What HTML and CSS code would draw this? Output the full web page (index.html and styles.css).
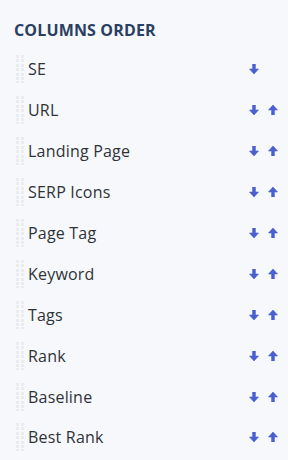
FILE: index.html
```html
<!DOCTYPE html>
<html>
<head>
<meta charset="utf-8">
<link rel="stylesheet" href="styles.css">
</head>
<body>
<div class="panel">
  <h2 class="title">COLUMNS ORDER</h2>
  <ul class="list">
    <li class="row"><span class="grip"></span><span class="label">SE</span><span class="actions"><svg class="arrow" viewBox="0 0 10 10"><path d="M3.6 0h2.8v5H9.5L5 10 0.5 5h3.1z"/></svg><span class="arrow-space"></span></span></li>
    <li class="row"><span class="grip"></span><span class="label">URL</span><span class="actions"><svg class="arrow" viewBox="0 0 10 10"><path d="M3.6 0h2.8v5H9.5L5 10 0.5 5h3.1z"/></svg><svg class="arrow" viewBox="0 0 10 10"><path d="M3.6 10h2.8V5H9.5L5 0 0.5 5h3.1z"/></svg></span></li>
    <li class="row"><span class="grip"></span><span class="label">Landing Page</span><span class="actions"><svg class="arrow" viewBox="0 0 10 10"><path d="M3.6 0h2.8v5H9.5L5 10 0.5 5h3.1z"/></svg><svg class="arrow" viewBox="0 0 10 10"><path d="M3.6 10h2.8V5H9.5L5 0 0.5 5h3.1z"/></svg></span></li>
    <li class="row"><span class="grip"></span><span class="label">SERP Icons</span><span class="actions"><svg class="arrow" viewBox="0 0 10 10"><path d="M3.6 0h2.8v5H9.5L5 10 0.5 5h3.1z"/></svg><svg class="arrow" viewBox="0 0 10 10"><path d="M3.6 10h2.8V5H9.5L5 0 0.5 5h3.1z"/></svg></span></li>
    <li class="row"><span class="grip"></span><span class="label">Page Tag</span><span class="actions"><svg class="arrow" viewBox="0 0 10 10"><path d="M3.6 0h2.8v5H9.5L5 10 0.5 5h3.1z"/></svg><svg class="arrow" viewBox="0 0 10 10"><path d="M3.6 10h2.8V5H9.5L5 0 0.5 5h3.1z"/></svg></span></li>
    <li class="row"><span class="grip"></span><span class="label">Keyword</span><span class="actions"><svg class="arrow" viewBox="0 0 10 10"><path d="M3.6 0h2.8v5H9.5L5 10 0.5 5h3.1z"/></svg><svg class="arrow" viewBox="0 0 10 10"><path d="M3.6 10h2.8V5H9.5L5 0 0.5 5h3.1z"/></svg></span></li>
    <li class="row"><span class="grip"></span><span class="label">Tags</span><span class="actions"><svg class="arrow" viewBox="0 0 10 10"><path d="M3.6 0h2.8v5H9.5L5 10 0.5 5h3.1z"/></svg><svg class="arrow" viewBox="0 0 10 10"><path d="M3.6 10h2.8V5H9.5L5 0 0.5 5h3.1z"/></svg></span></li>
    <li class="row"><span class="grip"></span><span class="label">Rank</span><span class="actions"><svg class="arrow" viewBox="0 0 10 10"><path d="M3.6 0h2.8v5H9.5L5 10 0.5 5h3.1z"/></svg><svg class="arrow" viewBox="0 0 10 10"><path d="M3.6 10h2.8V5H9.5L5 0 0.5 5h3.1z"/></svg></span></li>
    <li class="row"><span class="grip"></span><span class="label">Baseline</span><span class="actions"><svg class="arrow" viewBox="0 0 10 10"><path d="M3.6 0h2.8v5H9.5L5 10 0.5 5h3.1z"/></svg><svg class="arrow" viewBox="0 0 10 10"><path d="M3.6 10h2.8V5H9.5L5 0 0.5 5h3.1z"/></svg></span></li>
    <li class="row"><span class="grip"></span><span class="label">Best Rank</span><span class="actions"><svg class="arrow" viewBox="0 0 10 10"><path d="M3.6 0h2.8v5H9.5L5 10 0.5 5h3.1z"/></svg><svg class="arrow" viewBox="0 0 10 10"><path d="M3.6 10h2.8V5H9.5L5 0 0.5 5h3.1z"/></svg></span></li>
  </ul>
</div>
</body>
</html>
```
FILE: styles.css
```css
html, body {
  margin: 0;
  padding: 0;
  background: #f7f8fb;
}
body {
  font-family: "Open Sans", "Noto Sans", sans-serif;
  width: 288px;
  height: 460px;
  overflow: hidden;
}
.panel {
  padding: 18px 0 0 14px;
}
.title {
  margin: 0 0 7px 0;
  font-size: 16px;
  font-weight: 700;
  color: #2a4062;
  line-height: 24px;
  letter-spacing: 0.15px;
}
.list {
  list-style: none;
  margin: 0;
  padding: 0;
}
.row {
  display: flex;
  align-items: center;
  height: 40.9px;
  padding-left: 2px;
  padding-right: 10px;
}
.grip {
  width: 8px;
  height: 28px;
  background-image: linear-gradient(#eaecf0, #eaecf0);
  -webkit-mask: repeating-linear-gradient(to right, #000 0 3px, transparent 3px 5px), repeating-linear-gradient(to bottom, #000 0 3px, transparent 3px 4.4px);
  -webkit-mask-composite: source-in;
  mask-composite: intersect;
  flex: none;
}
.label {
  flex: 1;
  margin-left: 4px;
  font-size: 16px;
  color: #2f3338;
  letter-spacing: 0.2px;
}
.actions {
  display: flex;
  gap: 9px;
  align-items: center;
}
.arrow, .arrow-space {
  width: 10px;
  height: 10px;
  display: block;
}
.arrow path {
  fill: #4a5fd0;
  stroke: #4a5fd0;
  stroke-width: 0.6;
  stroke-linejoin: round;
}
```
